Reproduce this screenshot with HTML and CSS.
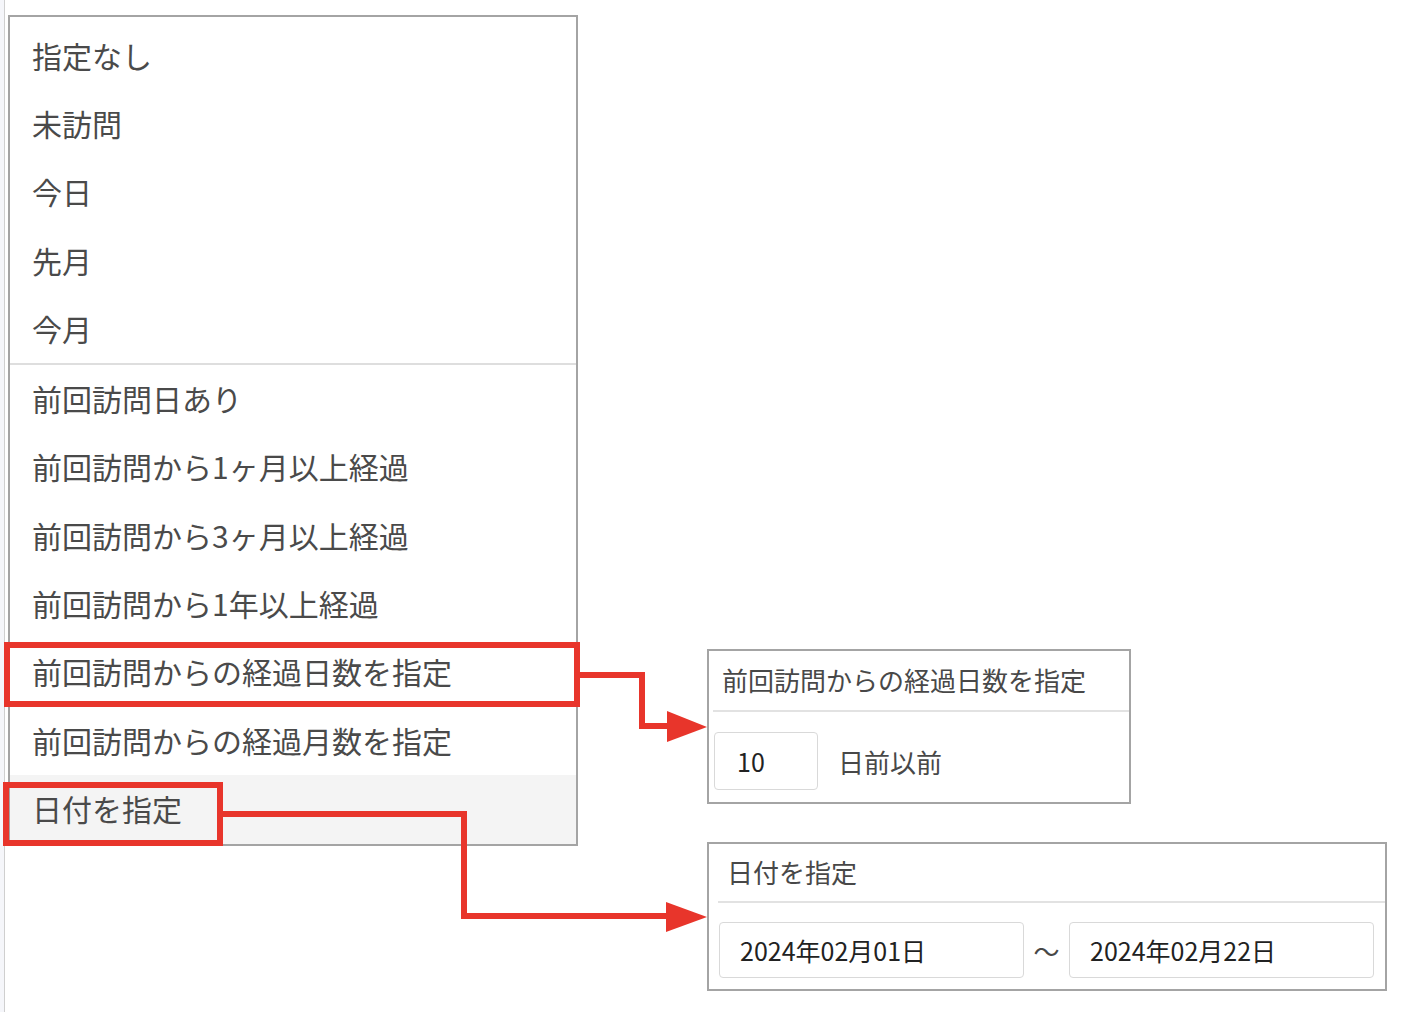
FILE: index.html
```html
<!DOCTYPE html>
<html lang="ja">
<head>
    <meta charset="UTF-8" />
    <meta name="viewport" content="width=device-width, initial-scale=1.0"/>
    <title>前回訪問日の絞り込み</title>
    <link rel="stylesheet" href="styles.css">
</head>
<body>
    <div class="page">
        <div class="menu">
            <div class="menu-group">
                <div class="menu-item">指定なし</div>
                <div class="menu-item">未訪問</div>
                <div class="menu-item">今日</div>
                <div class="menu-item">先月</div>
                <div class="menu-item">今月</div>
            </div>
            <div class="menu-group divided">
                <div class="menu-item">前回訪問日あり</div>
                <div class="menu-item">前回訪問から1ヶ月以上経過</div>
                <div class="menu-item">前回訪問から3ヶ月以上経過</div>
                <div class="menu-item">前回訪問から1年以上経過</div>
                <div class="menu-item">前回訪問からの経過日数を指定</div>
                <div class="menu-item">前回訪問からの経過月数を指定</div>
                <div class="menu-item hover">日付を指定</div>
            </div>
        </div>

        <div class="side">
            <div class="panel panel-days">
                <div class="panel-header">前回訪問からの経過日数を指定</div>
                <div class="panel-body">
                    <input class="field field-days" type="text" value="10" />
                    <span class="field-label">日前以前</span>
                </div>
            </div>

            <div class="panel panel-dates">
                <div class="panel-header">日付を指定</div>
                <div class="panel-body">
                    <input class="field field-date" type="text" value="2024年02月01日" />
                    <span class="range-sep">〜</span>
                    <input class="field field-date" type="text" value="2024年02月22日" />
                </div>
            </div>
        </div>
    </div>

    <!-- red callouts drawn over the screenshot -->
    <svg class="annotations" width="1428" height="1012" viewBox="0 0 1428 1012">
        <g fill="none" stroke="#e8352b" stroke-width="6" stroke-linejoin="miter">
            <rect x="7" y="645" width="570" height="59" />
            <rect x="6" y="785" width="214" height="58" />
            <polyline points="577,675 642,675 642,726 670,726" />
            <polyline points="220,814 464,814 464,916 670,916" />
        </g>
        <polygon fill="#e8352b" points="667,711 707,727 667,742" />
        <polygon fill="#e8352b" points="666,902 707,917 666,932" />
    </svg>
</body>
</html>
```

FILE: styles.css
```css
* {
    margin: 0;
    padding: 0;
    box-sizing: border-box;
}

body {
    position: relative;
    font-family: 'Noto Sans CJK JP', 'Noto Sans', sans-serif;
    background-color: #f5f6fa;
    color: #444;
    overflow: hidden;
}

.page {
    display: flex;
    align-items: flex-start;
    min-height: 100vh;
    margin-left: 4px;
    padding: 15px 0 0 3px;
    border-left: 1px solid #cfcfcf;
    background-color: #fff;
}

/* dropdown list */
.menu {
    width: 570px;
    border: 2px solid #a4a4a4;
    background-color: #fff;
}

.menu-group:first-child {
    padding-top: 5px;
}

.menu-group.divided {
    border-top: 2px solid #dedede;
}

.menu-item {
    display: flex;
    align-items: center;
    height: 68.3px;
    padding: 0 0 3px 22px;
    font-size: 30px;
    color: #4a4a4a;
    white-space: nowrap;
}

.menu-item.hover {
    background-color: #f4f4f4;
}

/* detail panels */
.side {
    display: flex;
    flex-direction: column;
    gap: 38px;
    margin-left: 129px;
    margin-top: 634px;
}

.panel {
    border: 2px solid #a4a4a4;
    background-color: #fff;
}

.panel-header {
    display: flex;
    align-items: center;
    padding: 0 0 2px 9px;
    font-size: 26px;
    color: #484848;
    border-bottom: 2px solid #e2e2e2;
}

.panel-body {
    display: flex;
    align-items: center;
}

.field {
    border: 1px solid #d9d9d9;
    border-radius: 4px;
    font-family: 'Noto Sans CJK JP', 'Noto Sans', sans-serif;
    font-size: 25px;
    color: #222;
    background-color: #fff;
    outline: none;
}

.panel-days {
    width: 424px;
}

.panel-days .panel-header {
    height: 61px;
    margin-left: 4px;
}

.panel-days .panel-body {
    padding: 20px 5px 12px;
}

.field-days {
    width: 104px;
    height: 58px;
    padding-left: 22px;
}

.field-label {
    margin-left: 20px;
    font-size: 26px;
    color: #484848;
}

.panel-dates {
    width: 680px;
}

.panel-dates .panel-header {
    height: 59px;
    margin-left: 9px;
}

.panel-dates .panel-body {
    padding: 19px 11px 11px 10px;
}

.field-date {
    width: 305px;
    height: 56px;
    padding-left: 20px;
}

.range-sep {
    width: 45px;
    text-align: center;
    font-size: 26px;
    color: #484848;
}

.annotations {
    position: absolute;
    top: 0;
    left: 0;
    pointer-events: none;
}
```
